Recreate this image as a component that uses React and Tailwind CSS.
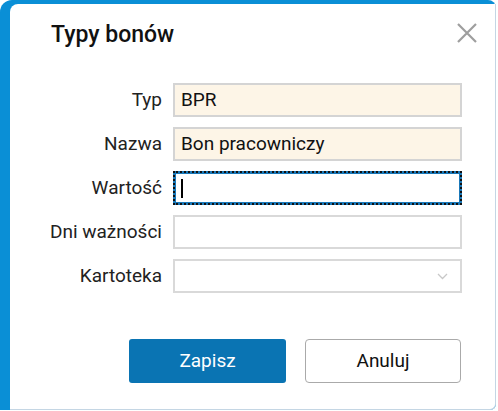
import React from 'react';

// ── Form row: right-aligned label + field ────────────────────────────────────
const Row = ({ label, children }) => (
  <div className="flex items-center h-[34px]">
    <label className="w-[163px] pr-[11px] text-right text-[19px] text-[#222] whitespace-nowrap">{label}</label>
    {children}
  </div>
);

const CloseIcon = () => (
  <svg width="22" height="22" viewBox="0 0 22 22" className="text-[#9e9e9e]">
    <path d="M2 2 L20 20 M20 2 L2 20" stroke="currentColor" strokeWidth="2.2" fill="none" />
  </svg>
);

const App = () => {
  return (
    <div className="w-[498px] h-[411px] bg-white" style={{ fontFamily: 'Roboto, "Liberation Sans", sans-serif' }}>
      {/* ── Blue window frame ── */}
      <div className="w-[496px] h-[410px] bg-[#0a8fd6] rounded-tl-[12px] rounded-tr-[8px] rounded-br-[6px] pl-[10px] pt-[4px] flex">
        <div className="flex-1 bg-white rounded-tl-[8px] rounded-br-[6px] border-r border-b border-[#c4d6e4] flex flex-col">
          {/* ── Header ── */}
          <div className="flex items-start justify-between pl-[41px] pr-[17px] pt-[16px] h-[79px]">
            <h1 className="text-[23px] leading-[30px] font-medium text-[#111]">Typy bonów</h1>
            <div className="mt-[2px]">
              <CloseIcon />
            </div>
          </div>

          {/* ── Fields ── */}
          <div className="flex flex-col gap-[10px]">
            <Row label="Typ">
              <div className="w-[289px] h-[34px] border-2 border-[#d4d4d4] bg-[#fdf5e7] px-[6px] flex items-center text-[19px] text-[#111]">BPR</div>
            </Row>
            <Row label="Nazwa">
              <div className="w-[289px] h-[34px] border-2 border-[#d4d4d4] bg-[#fdf5e7] px-[6px] flex items-center text-[19px] text-[#111]">Bon pracowniczy</div>
            </Row>
            <Row label="Wartość">
              <div className="w-[289px] h-[34px] border-2 border-dotted border-[#111] bg-[#1a78b8] p-0">
                <div className="w-full h-full bg-white border border-[#1a78b8] px-[5px] flex items-center">
                  <span className="w-[2px] h-[19px] bg-black" />
                </div>
              </div>
            </Row>
            <Row label="Dni ważności">
              <div className="w-[289px] h-[34px] border-2 border-[#d9d9d9] bg-white" />
            </Row>
            <Row label="Kartoteka">
              <div className="w-[289px] h-[34px] border-2 border-[#d9d9d9] bg-white flex items-center justify-end pr-[12px]">
                <svg width="11" height="7" viewBox="0 0 11 7">
                  <path d="M1 1 L5.5 5.5 L10 1" stroke="#c8c8c8" strokeWidth="1.3" fill="none" />
                </svg>
              </div>
            </Row>
          </div>

          {/* ── Buttons ── */}
          <div className="flex gap-[19px] pl-[119px] mt-[46px]">
            <button className="w-[157px] h-[44px] rounded-[3px] bg-[#0a74b3] text-white text-[19px]">Zapisz</button>
            <button className="w-[156px] h-[44px] rounded-[4px] border-[1.5px] border-[#aaaaaa] bg-white text-[#111] text-[19px]">Anuluj</button>
          </div>
        </div>
      </div>
    </div>
  );
};

export default App;
